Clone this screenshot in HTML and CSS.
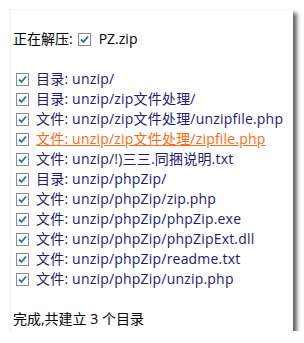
FILE: index.html
```html
<!DOCTYPE html>
<html>
<head>
<meta charset="utf-8">
<link rel="stylesheet" href="styles.css">
</head>
<body>
<div class="panel">
  <div class="head"><span>正在解压:</span><span class="cb"></span><span class="name">PZ.zip</span></div>
  <ul class="list">
    <li><span class="cb"></span><span class="t">目录: unzip/</span></li>
    <li><span class="cb"></span><span class="t">目录: unzip/zip文件处理/</span></li>
    <li><span class="cb"></span><span class="t">文件: unzip/zip文件处理/unzipfile.php</span></li>
    <li class="hot"><span class="cb"></span><span class="t">文件: unzip/zip文件处理/zipfile.php</span></li>
    <li><span class="cb"></span><span class="t">文件: unzip/!)三三.同捆说明.txt</span></li>
    <li><span class="cb"></span><span class="t">目录: unzip/phpZip/</span></li>
    <li><span class="cb"></span><span class="t">文件: unzip/phpZip/zip.php</span></li>
    <li><span class="cb"></span><span class="t">文件: unzip/phpZip/phpZip.exe</span></li>
    <li><span class="cb"></span><span class="t">文件: unzip/phpZip/phpZipExt.dll</span></li>
    <li><span class="cb"></span><span class="t">文件: unzip/phpZip/readme.txt</span></li>
    <li><span class="cb"></span><span class="t">文件: unzip/phpZip/unzip.php</span></li>
  </ul>
  <div class="foot">完成,共建立 3 个目录</div>
</div>
</body>
</html>
```
FILE: styles.css
```css
html, body { margin: 0; padding: 0; background: #fff; }
body {
  font-family: "Open Sans", "Noto Sans CJK SC", sans-serif;
  font-size: 14px;
  color: #000;
}
.panel {
  margin: 9px 0 0 10px;
  width: 283px;
  height: 322px;
  box-sizing: border-box;
  padding: 19px 0 0 2px;
  background: #fff;
  border-top: 1px solid #f0f0f0;
  border-left: 1px solid #f0f0f0;
  box-shadow: 4px 4px 4px rgba(0,0,0,0.6);
}
.head, .list li, .foot {
  height: 20px;
  line-height: 20px;
  display: flex;
  align-items: center;
  white-space: nowrap;
}
.cb {
  width: 11px;
  height: 11px;
  border: 1px solid #8a8a8a;
  background: #fff url("data:image/svg+xml;utf8,<svg xmlns='http://www.w3.org/2000/svg' viewBox='0 0 11 11'><path d='M2 5.5 L4.5 8 L9 2.5' fill='none' stroke='%231a73b8' stroke-width='1.8'/></svg>") no-repeat center;
  flex: none;
}
.head .cb { margin: 0 8px 0 5px; }
.list {
  list-style: none;
  margin: 20px 0 0;
  padding: 0 0 0 3px;
}
.list .cb { margin-right: 7px; }
.list .t { color: #241a6e; letter-spacing: 0.2px; }
.list li.hot .t { color: #ff6a13; text-decoration: underline; }
.foot { margin-top: 20px; }
```
